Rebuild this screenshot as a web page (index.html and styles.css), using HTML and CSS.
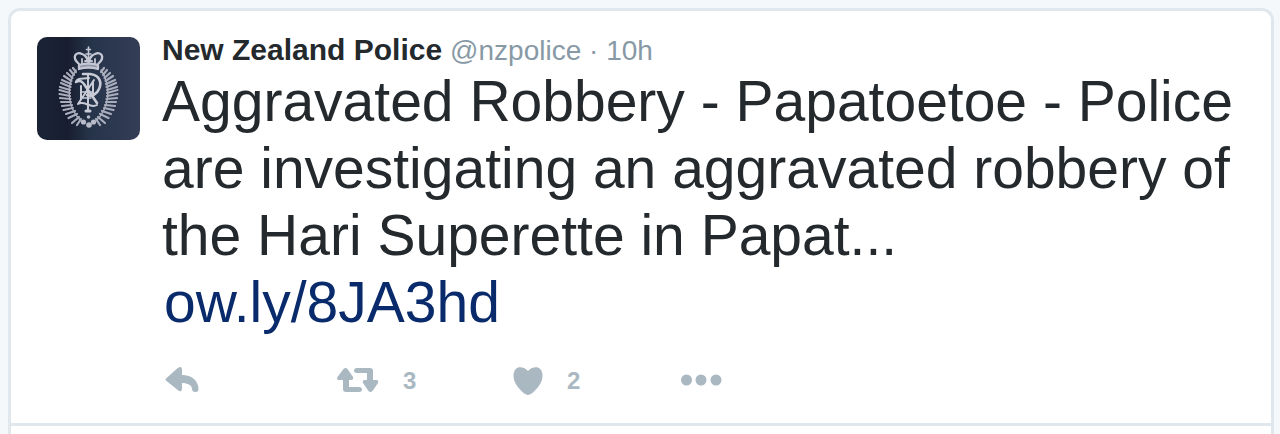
FILE: index.html
```html
<!DOCTYPE html>
<html lang="en">
<head>
<meta charset="utf-8">
<title>New Zealand Police</title>
<link rel="stylesheet" href="styles.css">
</head>
<body>
<main class="stream">
  <article class="tweet">
    <svg class="avatar" viewBox="0 0 103 103" role="img" aria-label="New Zealand Police crest">
      <defs>
        <linearGradient id="night" x1="0" y1="0" x2="1" y2="0">
          <stop offset="0" stop-color="#1a2336"/>
          <stop offset=".3" stop-color="#181e30"/>
          <stop offset=".52" stop-color="#26344a"/>
          <stop offset="1" stop-color="#343d56"/>
        </linearGradient>
        <g id="fern" fill="none" stroke="#a9adbc" stroke-linecap="round">
          <path stroke-width="2.200" d="M39 35L36 31M37 38L33 33M35.500 41L30 36M34.500 44L27 39M34 47L25 43M33.500 50L24 46M33 53L23 50M33 56L22.500 53M33 59L22.500 57M33.500 62L23 61M34 65L24 65M35 68L25 69M36 71L26.500 73M38 74L29 77M40 77L31.500 81M42 80L35 86M44 82L40 88"/>
          <path stroke-width="1.500" d="M39 33C29 48 29 70 45 85"/>
        </g>
      </defs>
      <rect width="103" height="103" fill="url(#night)"/>
      <use href="#fern"/>
      <use href="#fern" transform="translate(103 0) scale(-1 1)"/>
      <g fill="none" stroke="#c5c8d4" stroke-width="2.300" stroke-linejoin="round" stroke-linecap="round">
        <path d="M42 27C34 20 39 14 45 17C49 18 50 21 51.500 25C53 21 54 18 58 17C64 14 69 20 61 27"/>
        <path d="M42 28Q51.500 25 61 28L61 32Q51.500 29 42 32Z" fill="#8e95a8"/>
        <path d="M51.500 10V24M49.500 12.500H53.500M49 17H54" stroke-width="1.600"/>
        <path d="M45 22V26M58 22V26M48 24H55" stroke-width="1.800"/>
      </g>
      <g fill="none" stroke="#c9ccd7" stroke-linejoin="round" stroke-linecap="round">
        <path d="M46 37H53C63 38 65 46 62 52C60 57 55 60 50 58" stroke-width="2.600"/>
        <path d="M39 45C43 42 46 45 49 50L60 66" stroke-width="2.600"/>
        <path d="M57 43L41 67C48 63 53 72 60 68M39 45C40 41 44 42 52 41" stroke-width="2"/>
        <path d="M44 49V62M51 37V73M56 45V58" stroke-width="2"/>
        <path d="M49 74H53" stroke-width="3"/>
        <path d="M45 55H55M46 61H54" stroke-width="1.300"/>
      </g>
      <g fill="#b8bcc9">
        <circle cx="51.500" cy="80" r="1.800"/>
        <circle cx="46.500" cy="85" r="2.600"/>
        <circle cx="56.500" cy="85" r="2.600"/>
        <circle cx="52" cy="88" r="2.800"/>
      </g>
    </svg>
    <div class="content">
      <header class="byline">
        <strong class="name">New Zealand Police</strong>
        <span class="meta">@nzpolice · 10h</span>
      </header>
      <p class="text">Aggravated Robbery - Papatoetoe - Police are investigating an aggravated robbery of the Hari Superette in Papat...</p>
      <a class="link" href="#">ow.ly/8JA3hd</a>
      <footer class="actions">
        <button class="action" type="button" aria-label="Reply">
          <svg width="36" height="28" viewBox="0 0 36 28"><path d="M1 11.500L13 .8Q17-1.500 17 3V8C27 8 33.500 14 33.500 22Q33.500 25 30.500 25Q27 25 27 22C27 18.500 23 16 17 16V21Q17 26 13 23.200L1 13.500Q0 12.500 1 11.500Z"/></svg>
        </button>
        <button class="action" type="button" aria-label="Retweet">
          <svg width="42" height="28" viewBox="0 0 42 28"><path d="M8.500 1Q9.500 1 10.500 2L16 10Q17 13 14 13H12V20H22Q25 20 25 22.500Q25 25 22 25H9Q6 25 6 22V13H2Q-1 13 .5 10L6.500 2Q7.500 1 8.500 1Z"/><path d="M33.500 25Q32.500 25 31.500 24L26 16Q25 13 28 13H30V6H20Q17 6 17 3.500Q17 1 20 1H33Q36 1 36 4V13H39Q42 13 41 16L35.500 24Q34.500 25 33.500 25Z"/></svg>
          <span class="count">3</span>
        </button>
        <button class="action like" type="button" aria-label="Like">
          <svg width="30" height="28" viewBox="0 0 30 28"><path d="M15 4C17.500 .5 22-.5 25 .5C31 3 30.500 12 26.500 18C22.500 24 17.500 28 15 28C12.500 28 7.500 24 3.500 18C-.5 12-1 3 5 .5C8-.5 12.500 .5 15 4Z"/></svg>
          <span class="count">2</span>
        </button>
        <button class="action" type="button" aria-label="More">
          <svg width="42" height="28" viewBox="0 0 42 28"><circle cx="5.500" cy="13" r="5.500"/><circle cx="20" cy="13" r="5.500"/><circle cx="35" cy="13" r="5.500"/></svg>
        </button>
      </footer>
    </div>
  </article>
</main>
</body>
</html>
```
FILE: styles.css
```css
* {
  box-sizing: border-box;
}

body {
  display: flex;
  flex-direction: column;
  min-height: 100vh;
  margin: 0;
  padding: 8px 6px 0 8px;
  background: #f5f8fa;
  font-family: "Liberation Sans", Arial, sans-serif;
  color: #24292d;
}

.stream {
  flex: 1;
  border: 3px solid #e1e8ed;
  border-bottom: 0;
  border-radius: 12px 12px 0 0;
  background: #fff;
}

.tweet {
  display: flex;
  gap: 22px;
  padding: 26px 24px 28px 26px;
  border-bottom: 3px solid #e1e8ed;
}

.avatar {
  flex: none;
  width: 103px;
  height: 103px;
  border-radius: 10px;
}

.content {
  flex: 1;
  min-width: 0;
}

.byline {
  display: flex;
  align-items: baseline;
  gap: 8px;
  line-height: 26px;
}

.name {
  font-size: 30px;
}

.meta {
  font-size: 28px;
  color: #8899a6;
}

.text {
  margin: 0;
  padding-top: 4px;
  font-size: 57px;
  line-height: 67px;
}

.link {
  display: block;
  width: fit-content;
  padding-left: 2px;
  font-size: 57px;
  line-height: 67px;
  color: #0a2b6b;
  text-decoration: none;
}

.actions {
  display: grid;
  grid-template-columns: repeat(4, 172px);
  padding: 31px 0 0 3px;
}

.action {
  display: flex;
  align-items: center;
  gap: 24px;
  padding: 0;
  border: 0;
  background: none;
  color: #aab8c2;
  font-family: inherit;
  cursor: pointer;
}

.like {
  padding-left: 4px;
}

.action svg {
  fill: currentColor;
}

.count {
  font-size: 24px;
  font-weight: bold;
  line-height: 28px;
}
```
